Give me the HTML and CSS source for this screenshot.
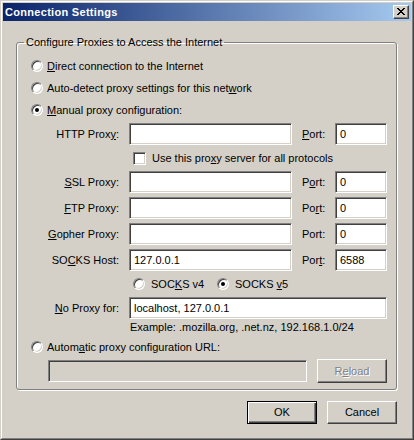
FILE: index.html
```html
<!DOCTYPE html>
<html>
<head>
<meta charset="utf-8">
<title>Connection Settings</title>
<link rel="stylesheet" href="styles.css">
</head>
<body>
<div class="window">
  <div class="frame">
    <div class="titlebar">
      <span class="title">Connection Settings</span>
      <span class="close">
        <svg width="8" height="7" viewBox="0 0 8 7" shape-rendering="crispEdges"><path d="M0 0h2v1h-2z M6 0h2v1h-2z M1 1h2v1h-2z M5 1h2v1h-2z M2 2h4v1h-4z M3 3h2v1h-2z M2 4h4v1h-4z M1 5h2v1h-2z M5 5h2v1h-2z M0 6h2v1h-2z M6 6h2v1h-2z" fill="#000"/></svg>
      </span>
    </div>
    <div class="client">
      <fieldset class="group">
        <legend class="legend">Configure Proxies to Access the Internet</legend>
        <div class="opt"><span class="radio"></span><span><u>D</u>irect connection to the Internet</span></div>
        <div class="opt"><span class="radio"></span><span>Auto-detect proxy settings for this net<u>w</u>ork</span></div>
        <div class="opt"><span class="radio checked"></span><span><u>M</u>anual proxy configuration:</span></div>

        <div class="grid">
          <span class="lbl">HTTP Prox<u>y</u>:</span>
          <span class="field"></span>
          <span class="plbl"><u>P</u>ort:</span>
          <span class="field">0</span>

          <div class="checkrow"><span class="check"></span><span>Use this pro<u>x</u>y server for all protocols</span></div>

          <span class="lbl"><u>S</u>SL Proxy:</span>
          <span class="field"></span>
          <span class="plbl">P<u>o</u>rt:</span>
          <span class="field">0</span>

          <span class="lbl"><u>F</u>TP Proxy:</span>
          <span class="field"></span>
          <span class="plbl">Po<u>r</u>t:</span>
          <span class="field">0</span>

          <span class="lbl"><u>G</u>opher Proxy:</span>
          <span class="field"></span>
          <span class="plbl">Port:</span>
          <span class="field">0</span>

          <span class="lbl">SO<u>C</u>KS Host:</span>
          <span class="field">127.0.0.1</span>
          <span class="plbl">Por<u>t</u>:</span>
          <span class="field">6588</span>

          <div class="sockrow">
            <span class="sock"><span class="radio"></span><span>SOC<u>K</u>S v4</span></span>
            <span class="sock"><span class="radio checked"></span><span>SOCKS <u>v</u>5</span></span>
          </div>

          <span class="lbl"><u>N</u>o Proxy for:</span>
          <span class="field wide">localhost, 127.0.0.1</span>

          <div class="example">Example: .mozilla.org, .net.nz, 192.168.1.0/24</div>
        </div>

        <div class="opt auto"><span class="radio"></span><span>Autom<u>a</u>tic proxy configuration URL:</span></div>
        <div class="urlrow">
          <span class="field disabled url"></span>
          <span class="btn disabled-btn reload">R<u>e</u>load</span>
        </div>
      </fieldset>
      <div class="buttons">
        <span class="btn default">OK</span>
        <span class="btn">Cancel</span>
      </div>
    </div>
  </div>
</div>
</body>
</html>
```
FILE: styles.css
```css
html, body {
  margin: 0;
  padding: 0;
  background: #D4D0C8;
}
body {
  font-family: "Liberation Sans", Arial, sans-serif;
  font-size: 11px;
  line-height: 13px;
  color: #000;
}
.window {
  width: 414px;
  height: 440px;
  box-sizing: border-box;
  border: 1px solid;
  border-color: #D4D0C8 #404040 #404040 #D4D0C8;
}
.frame {
  height: 100%;
  box-sizing: border-box;
  border: 1px solid;
  border-color: #FFFFFF #808080 #808080 #FFFFFF;
  padding: 1px;
  display: flex;
  flex-direction: column;
}
.titlebar {
  height: 18px;
  flex: none;
  display: flex;
  align-items: center;
  justify-content: space-between;
  background: linear-gradient(to right, #0A246A, #A6CAF0);
  padding-left: 2px;
}
.title {
  color: #fff;
  font-weight: bold;
  font-size: 11px;
  letter-spacing: 0.3px;
}
.close {
  width: 16px;
  height: 14px;
  box-sizing: border-box;
  margin-right: 2px;
  background: #D4D0C8;
  border: 1px solid;
  border-color: #FFFFFF #404040 #404040 #FFFFFF;
  box-shadow: inset -1px -1px 0 #808080;
  display: flex;
  align-items: center;
  justify-content: center;
  padding: 0 1px 1px 0;
}
.close svg { display: block; }
.client {
  flex: 1;
  padding: 0 14px 0 13px;
}
.group {
  margin: 15px 0 0 0;
  padding: 6px 0 6px 0;
  min-width: 0;
  border: 1px solid #808080;
  border-radius: 3px;
  box-shadow: 1px 1px 0 #fff, inset 1px 1px 0 #fff;
}
.legend {
  margin-left: 7px;
  padding: 0 2px;
  line-height: 13px;
}
.opt {
  display: flex;
  align-items: center;
  height: 22px;
  padding-left: 14px;
  gap: 4px;
}
.radio {
  width: 12px;
  height: 12px;
  box-sizing: border-box;
  border-radius: 50%;
  background: #fff;
  border: 1px solid;
  border-color: #808080 #FFFFFF #FFFFFF #808080;
  box-shadow: inset 1px 1px 0 #404040, inset -1px -1px 0 #D4D0C8;
  flex: none;
  display: flex;
  align-items: center;
  justify-content: center;
}
.radio.checked::after {
  content: "";
  width: 4px;
  height: 4px;
  border-radius: 50%;
  background: #000;
}
.grid {
  display: grid;
  grid-template-columns: 102px 163px 23px 52px;
  column-gap: 10px;
  row-gap: 4px;
  margin-top: 2px;
}
.lbl {
  text-align: right;
  line-height: 22px;
  white-space: nowrap;
}
.plbl {
  line-height: 22px;
}
.field {
  height: 22px;
  box-sizing: border-box;
  background: #fff;
  border: 1px solid;
  border-color: #808080 #FFFFFF #FFFFFF #808080;
  box-shadow: inset 1px 1px 0 #404040, inset -1px -1px 0 #D4D0C8;
  padding: 0 3px 0 4px;
  line-height: 20px;
  white-space: nowrap;
}
.field.wide {
  grid-column: 2 / span 3;
}
.field.disabled {
  background: #D4D0C8;
}
.checkrow {
  grid-column: 2 / span 3;
  height: 18px;
  display: flex;
  align-items: center;
  padding-left: 4px;
  gap: 6px;
}
.check {
  width: 13px;
  height: 13px;
  box-sizing: border-box;
  background: #fff;
  border: 1px solid;
  border-color: #808080 #FFFFFF #FFFFFF #808080;
  box-shadow: inset 1px 1px 0 #404040, inset -1px -1px 0 #D4D0C8;
  flex: none;
}
.sockrow {
  grid-column: 2 / span 3;
  height: 18px;
  display: flex;
  align-items: center;
  padding-left: 4px;
}
.sock {
  display: flex;
  align-items: center;
  gap: 6px;
  width: 84px;
}
.example {
  grid-column: 2 / span 3;
  padding-left: 1px;
  margin-top: -2px;
  line-height: 13px;
}
.opt.auto {
  margin-top: 2px;
}
.urlrow {
  display: flex;
  align-items: center;
  height: 24px;
  margin-top: 1px;
  padding-left: 31px;
  gap: 10px;
}
.url {
  width: 259px;
}
.btn {
  width: 70px;
  height: 23px;
  box-sizing: border-box;
  display: flex;
  align-items: center;
  justify-content: center;
  background: #D4D0C8;
  border: 1px solid;
  border-color: #FFFFFF #404040 #404040 #FFFFFF;
  box-shadow: inset -1px -1px 0 #808080;
}
.reload {
  height: 24px;
}
.disabled-btn {
  color: #808080;
  text-shadow: 1px 1px 0 #fff;
}
.btn.default {
  border: 1px solid #000;
  box-shadow: inset 1px 1px 0 #fff, inset -1px -1px 0 #404040, inset -2px -2px 0 #808080;
}
.buttons {
  display: flex;
  justify-content: flex-end;
  gap: 10px;
  margin-top: 11px;
}
```
